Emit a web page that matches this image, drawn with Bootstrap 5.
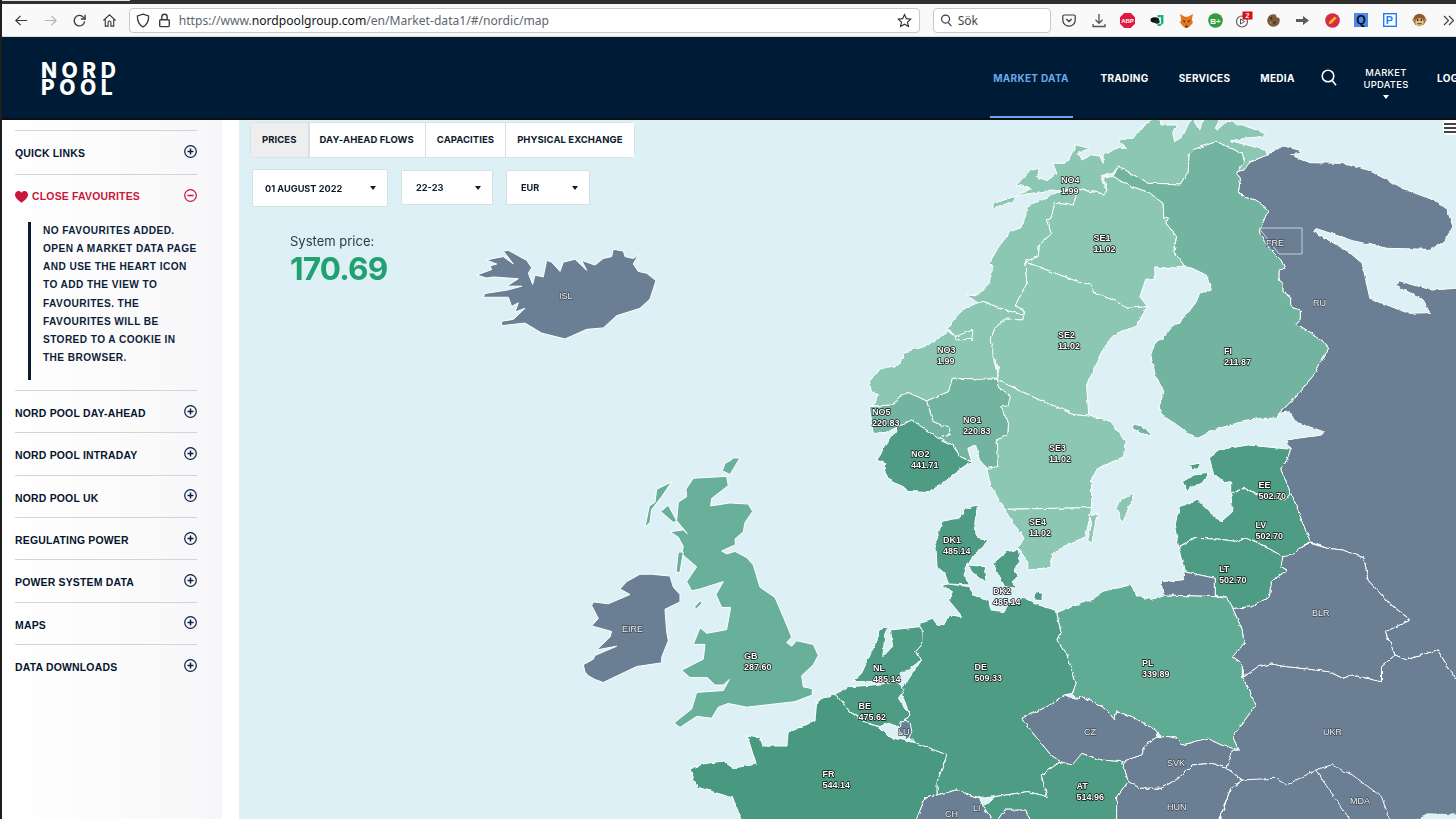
<!DOCTYPE html>
<html lang="en">
<head>
<meta charset="utf-8">
<title>Nord Pool</title>
<link href="https://cdn.jsdelivr.net/npm/bootstrap@5.3.0/dist/css/bootstrap.min.css" rel="stylesheet">
<style>
html,body{height:100%;margin:0;overflow:hidden;background:#fff;font-family:"Liberation Sans",sans-serif}
.win{height:819px;width:1456px;border-left:2px solid #1e1e1e;overflow:hidden}
.strip{height:4px;background:#2f2f2f;flex:none;position:relative}
.strip i{display:block;height:1px;width:128px;background:#e8e8e8}
.toolbar{height:33px;flex:none;background:#f9f9fa;border-bottom:1px solid #dcdcdc;padding-left:5px}
.tb-btn{width:29.2px;display:flex;justify-content:center;align-items:center;flex:none}
.urlbar{width:791px;height:25px;margin-left:5px;background:#fff;border:1px solid #c9c9c9;border-radius:4px;padding:0 7px 0 6px;flex:none}
.urltext{font:12.12px "Noto Sans",sans-serif;color:#5d6670;margin-left:8px;white-space:nowrap}
.urltext b{font-weight:400;color:#15151a}
.searchbar{width:118px;height:25px;margin:0 4px 0 13px;background:#fff;border:1px solid #c9c9c9;border-radius:4px;padding-left:6px;font:12px "Noto Sans",sans-serif;color:#444;flex:none;gap:5px}
.ext{width:29.2px;display:flex;justify-content:center;align-items:center;flex:none}
.hdr{height:81px;flex:none;background:#001b36;border-bottom:2px solid #0b0f14;padding:0 0 0 39px;box-sizing:content-box;flex-wrap:nowrap}
.logo{font:800 21px/17px Inter,sans-serif;letter-spacing:4.5px;color:#fff;margin:2px 0 0;padding:0;white-space:nowrap}
.mainnav{height:81px;width:485px;align-items:stretch;flex-wrap:nowrap;margin-right:-22px}
.mainnav .nav-link{font:700 10px/12px Inter,sans-serif;letter-spacing:.3px;color:#fff;padding:0;display:flex;align-items:center;justify-content:center;position:relative;white-space:nowrap;flex:none}
.mainnav .nav-link.active{color:#6ba7ea}
.mainnav .nav-link.active::after{content:"";position:absolute;left:-3px;right:-4px;bottom:0;height:2px;background:#6ba7ea}
.n-md{width:76px;margin-right:32px}
.n-tr{width:47px;margin-right:31px}
.n-se{width:51px;margin-right:31px}
.n-me{width:33px;margin-right:27px}
.n-sr{width:16px}
.mainnav .mu{flex-direction:column;font-weight:500;font-size:9.4px;text-align:center;width:44px;margin:0 29px 0 27px;padding-top:11px}
.mu i{display:block;width:0;height:0;border:3.5px solid transparent;border-top:4px solid #fff;border-bottom:0;margin:4px auto 0}
.side{width:220px;flex:none;background:linear-gradient(90deg,#fff 0,#f7f7f9 100%);padding:9.5px 25px 0 13px}
.side .list-group-item{background:transparent;border:0;border-radius:0;border-bottom:1px solid #cfd5de;padding:0;height:42.35px;color:#06142e;font-weight:700;font-size:10.45px;letter-spacing:.2px}
.side .list-group-item:first-child{border-top:1px solid #cfd5de;height:45.3px}
.rowh{height:100%;padding-top:4px}
.side .rowh svg{margin-top:-5px}
.favrow.list-group-item{height:216.3px}
.favhead{height:43px;color:#c8173c;gap:5px;padding-top:2px}
.favhead .ttl{display:flex;align-items:center;gap:4px}
.favnote{margin:4px 0 0 13px;border-left:3px solid #0b1a30;padding:0 0 0 12px;font-weight:700;font-size:10.15px;line-height:18.2px;height:158px;letter-spacing:.42px;color:#0e1e3a;white-space:nowrap}
.gap-w{width:17px;flex:none;background:#fff}
.mapwrap{position:relative;flex:1 1 auto;background:#dcf0f6;overflow:hidden;padding:2px 0 0 11px}
.mapsvg{position:absolute;left:0;top:0}
.mapsvg polygon,.mapsvg polyline{stroke:#fff;stroke-width:1;vector-effect:non-scaling-stroke;stroke-linejoin:round}
.mapsvg polyline{fill:none}
.c-se{fill:#8bc7b2}.c-fi{fill:#72b4a0}.c-gb{fill:#69b09a}.c-pl{fill:#61ab94}.c-de{fill:#4f9c84}.c-fr{fill:#4a9980}.c-g{fill:#6a7f93}
.mapsvg text{font:700 9px "Liberation Sans",sans-serif;fill:#fff;stroke:#0b0b0b;stroke-width:1.4px;paint-order:stroke;stroke-linejoin:round}
.mapsvg text.gl{stroke:#3e4a57;stroke-width:1.3px;fill:#f2f2f2;font-weight:400}
.tabs{position:relative;background:#fff;border:1px solid #d6e1e6;display:inline-flex}
.tabs .btn{border:0;border-radius:0;border-right:2px solid #d6e1e6;background:#fff;color:#0d1b2e;font:700 9.5px/34px Inter,sans-serif;padding:0 11px;height:34px;letter-spacing:.07px}
.tabs .btn:last-child{border-right:0}
.tabs .btn.active{background:#eeeeee;color:#0d1b2e}
.pickers{position:relative;margin:11px 0 0 2px;gap:13px;align-items:flex-start}
.pick{background:#fff;border:1px solid #d6e1e6;color:#0d1b2e;font:700 9.2px Inter,sans-serif;height:35px;border-radius:0;padding:0 11px 0 14px;margin-top:1px}
.pick.big{height:38px;margin-top:0;padding-left:12px}
.pick::after{content:"";width:0;height:0;border:3.5px solid transparent;border-top:4px solid #0d1b2e;border-bottom:0}
.sysp{position:relative;margin:26px 0 0 40px;color:#2b3848;font:400 13px/16px Inter,sans-serif}
.sysp strong{display:block;color:#22a06f;font:700 31.5px/36px Inter,sans-serif;letter-spacing:-.8px;margin-top:2px}
.burger{position:absolute;right:0;top:0;width:13px;height:15px;background:#fff;border-radius:0 0 0 2px;padding:3px 0 0 1px}
.burger i{display:block;height:2px;background:#444;margin-bottom:2px}
</style>
</head>
<body>
<div class="win d-flex flex-column">
  <div class="strip"><i></i></div>
  <div class="toolbar d-flex align-items-center">
    <span class="tb-btn"><svg width="15" height="15" viewBox="0 0 16 16" fill="none" stroke="#3a3a3e" stroke-width="1.3"><path d="M14 8H2M7 3 2 8l5 5"/></svg></span>
    <span class="tb-btn"><svg width="15" height="15" viewBox="0 0 16 16" fill="none" stroke="#b4b4b8" stroke-width="1.3"><path d="M2 8h12M9 3l5 5-5 5"/></svg></span>
    <span class="tb-btn"><svg width="15" height="15" viewBox="0 0 16 16" fill="none" stroke="#3a3a3e" stroke-width="1.4"><path d="M13.5 9a5.6 5.6 0 1 1-1.4-4.6L14 6.2"/><path d="M14 1.8v4.6H9.5"/></svg></span>
    <span class="tb-btn"><svg width="15" height="15" viewBox="0 0 16 16" fill="none" stroke="#3a3a3e" stroke-width="1.2"><path d="M1.5 8 8 2l6.5 6M3.5 7v7h3v-4a1.5 1.5 0 0 1 3 0v4h3V7"/></svg></span>
    <div class="urlbar d-flex align-items-center">
      <svg width="14" height="15" viewBox="0 0 14 15" fill="none" stroke="#3a3a3e" stroke-width="1.3"><path d="M7 1.2 12.6 3c.2 5-1.4 8.700-5.600 10.800C2.800 11.700 1.200 8 1.400 3z"/></svg>
      <svg class="ms-2" width="13" height="15" viewBox="0 0 13 15" fill="none" stroke="#3a3a3e" stroke-width="1.4"><rect x="1.700" y="6.800" width="9.600" height="6.800" rx="1"/><path d="M3.800 6.800V4a2.700 2.700 0 0 1 5.400 0v2.800"/></svg>
      <span class="urltext">https://www.<b>nordpoolgroup.com</b>/en/Market-data1/#/nordic/map</span>
      <svg class="ms-auto" width="15" height="15" viewBox="0 0 16 16" fill="none" stroke="#2e2e32" stroke-width="1.2"><path d="m8 1.600 2 4.400 4.700.500-3.500 3.200 1 4.700L8 12l-4.200 2.400 1-4.700L1.300 6.500 6 6z"/></svg>
    </div>
    <div class="searchbar d-flex align-items-center">
      <svg width="13" height="13" viewBox="0 0 14 14" fill="none" stroke="#3a3a3e" stroke-width="1.300"><circle cx="6" cy="5.500" r="4.300"/><path d="m9 9.200 3.300 3.800"/></svg>Sök
    </div>
    <span class="ext"><svg width="14" height="13" viewBox="0 0 14 13" fill="none" stroke="#3a3a3e" stroke-width="1.200"><path d="M2 1h10a1.200 1.200 0 0 1 1.200 1.200V6A6.200 6.200 0 0 1 .8 6V2.200A1.200 1.200 0 0 1 2 1z"/><path d="m4.300 5 2.700 2.600L9.700 5" stroke-width="1.400"/></svg></span>
    <span class="ext"><svg width="14" height="15" viewBox="0 0 14 15" fill="none" stroke="#55555a" stroke-width="1.300"><path d="M7 1v9M3.500 6.800 7 10.300l3.500-3.500M1 11v2.500h12V11"/></svg></span>
    <span class="ext"><svg width="15" height="15" viewBox="0 0 14 14"><polygon points="4,0 10,0 14,4 14,10 10,14 4,14 0,10 0,4" fill="#e3173f"/><text x="7" y="9.300" text-anchor="middle" font-size="5.600" font-weight="700" fill="#fff" font-family="Liberation Sans">ABP</text></svg></span>
    <span class="ext"><svg width="14" height="13" viewBox="0 0 13 12"><path d="M7 1h5.500v7.500L9.500 11H7V9h3.200V3H7z" fill="#12b57e"/><ellipse cx="4.500" cy="5.500" rx="4" ry="2.500" fill="#111"/><ellipse cx="6.500" cy="7" rx="2.500" ry="2" fill="#222"/></svg></span>
    <span class="ext"><svg width="15" height="15" viewBox="0 0 14 14"><path d="M1 1l4.500 2.500h3L13 1l-1 5 1 3-3 3.500-1.500 1h-3L4 12.500 1 9l1-3z" fill="#e4761b"/><path d="M5.500 13.500 7 11l1.500 2.500z" fill="#243447"/><path d="M3.500 6.500 6 7.500 5 9zM10.500 6.500 8 7.500 9 9z" fill="#5b2a0c"/></svg></span>
    <span class="ext"><svg width="15" height="15" viewBox="0 0 14 14"><circle cx="7" cy="7" r="6.800" fill="#2e9c3f"/><text x="7" y="9.800" text-anchor="middle" font-size="7.500" font-weight="700" fill="#fff" font-family="Liberation Sans">B+</text></svg></span>
    <span class="ext"><svg width="18" height="18" viewBox="0 0 18 17"><circle cx="7" cy="10" r="5.500" fill="none" stroke="#55555a" stroke-width="1.100"/><path d="m5.500 7.500 4 2.500-4 2.500z" fill="none" stroke="#55555a" stroke-width="1"/><rect x="7.500" y="0" width="10" height="8" fill="#d70f14"/><text x="12.500" y="6.800" text-anchor="middle" font-size="7" fill="#fff" font-weight="700" font-family="Liberation Sans">2</text></svg></span>
    <span class="ext"><svg width="14" height="14" viewBox="0 0 13 13"><circle cx="6" cy="7" r="5.800" fill="#7c5a3e"/><circle cx="4" cy="5" r="1" fill="#3e2a1a"/><circle cx="7" cy="9" r="1" fill="#3e2a1a"/><circle cx="3.500" cy="9" r=".8" fill="#b39a80"/><circle cx="11" cy="2" r="2.500" fill="#f9f9fa"/></svg></span>
    <span class="ext"><svg width="13" height="9" viewBox="0 0 13 9"><path d="M0 3h7V0l6 4.500L7 9V6H0z" fill="#5c5c60"/></svg></span>
    <span class="ext"><svg width="15" height="15" viewBox="0 0 14 14"><circle cx="7" cy="7" r="6.800" fill="#d92a48"/><path d="m3.500 10.500.6-2.500L9 3.200 10.900 5 6 9.900z" fill="#f8b62b"/></svg></span>
    <span class="ext"><svg width="14" height="14" viewBox="0 0 13 13"><rect width="13" height="13" fill="#4d8ae8"/><text x="6.500" y="10.500" text-anchor="middle" font-size="11.500" font-weight="700" fill="#08101e" font-family="Liberation Sans">Q</text></svg></span>
    <span class="ext"><svg width="14" height="14" viewBox="0 0 13 13"><rect width="13" height="13" fill="#1e7ff0"/><rect x="1.300" y="1.300" width="10.400" height="10.400" fill="#fff"/><text x="5.800" y="10" text-anchor="middle" font-size="10" font-weight="700" fill="#1e7ff0" font-family="Liberation Sans">P</text></svg></span>
    <span class="ext"><svg width="15" height="15" viewBox="0 0 14 14"><circle cx="7" cy="6.500" r="5.800" fill="#8e5d25"/><circle cx="1.600" cy="6.500" r="1.300" fill="#b88a4a"/><circle cx="12.400" cy="6.500" r="1.300" fill="#b88a4a"/><ellipse cx="7" cy="8.500" rx="4" ry="3.600" fill="#e4c388"/><rect x="4.600" y="5.800" width="1.400" height="1.600" fill="#18110a"/><rect x="8" y="5.800" width="1.400" height="1.600" fill="#18110a"/><path d="M5 10h4" stroke="#5d3c18"/></svg></span>
    <span class="ext"><svg width="12" height="11" viewBox="0 0 12 11" fill="none" stroke="#3a3a3e" stroke-width="1.100"><path d="m1 1 4.500 4.500L1 10M6 1l4.500 4.500L6 10"/></svg></span>
  </div>

  <nav class="navbar hdr d-flex align-items-center justify-content-between">
    <a class="navbar-brand logo" href="#">NORD<br>POOL</a>
    <div class="nav mainnav">
      <a class="nav-link active n-md" href="#">MARKET DATA</a>
      <a class="nav-link n-tr" href="#">TRADING</a>
      <a class="nav-link n-se" href="#">SERVICES</a>
      <a class="nav-link n-me" href="#">MEDIA</a>
      <a class="nav-link n-sr" href="#" aria-label="Search"><svg width="16" height="17" viewBox="0 0 16 17" fill="none" stroke="#fff" stroke-width="1.600"><circle cx="7" cy="7" r="5.800"/><path d="m11 11.200 4 5"/></svg></a>
      <a class="nav-link mu" href="#"><span>MARKET<br>UPDATES</span><i></i></a>
      <a class="nav-link" href="#">LOGIN</a>
    </div>
  </nav>

  <div class="d-flex flex-grow-1 overflow-hidden">
    <aside class="side">
      <ul class="list-group list-group-flush">
        <li class="list-group-item"><div class="rowh d-flex justify-content-between align-items-center"><span>QUICK LINKS</span><svg width="13" height="13" viewBox="0 0 13 13" fill="none" stroke="#0b1f45" stroke-width="1.200"><circle cx="6.500" cy="6.500" r="5.800"/><path d="M6.500 3.500v6M3.500 6.500h6" stroke-width="1.500"/></svg></div></li>
        <li class="list-group-item favrow">
          <div class="favhead d-flex justify-content-between align-items-center">
            <span class="ttl"><svg width="13" height="12" viewBox="0 0 13 12"><path d="M6.500 11.800C2 8.300 0 6.300 0 3.700 0 1.600 1.600 0 3.500 0c1.200 0 2.300.6 3 1.700C7.200.6 8.300 0 9.500 0 11.400 0 13 1.600 13 3.700c0 2.600-2 4.600-6.500 8.100z" fill="#c8173c"/></svg>CLOSE FAVOURITES</span>
            <svg style="margin-top:-3px" width="13" height="13" viewBox="0 0 13 13" fill="none" stroke="#c8173c" stroke-width="1.200"><circle cx="6.500" cy="6.500" r="5.800"/><path d="M3.500 6.500h6" stroke-width="1.500"/></svg>
          </div>
          <div class="favnote">NO FAVOURITES ADDED.<br>OPEN A MARKET DATA PAGE<br>AND USE THE HEART ICON<br>TO ADD THE VIEW TO<br>FAVOURITES. THE<br>FAVOURITES WILL BE<br>STORED TO A COOKIE IN<br>THE BROWSER.</div>
        </li>
        <li class="list-group-item"><div class="rowh d-flex justify-content-between align-items-center"><span>NORD POOL DAY-AHEAD</span><svg width="13" height="13" viewBox="0 0 13 13" fill="none" stroke="#0b1f45" stroke-width="1.200"><circle cx="6.500" cy="6.500" r="5.800"/><path d="M6.500 3.500v6M3.500 6.500h6" stroke-width="1.500"/></svg></div></li>
        <li class="list-group-item"><div class="rowh d-flex justify-content-between align-items-center"><span>NORD POOL INTRADAY</span><svg width="13" height="13" viewBox="0 0 13 13" fill="none" stroke="#0b1f45" stroke-width="1.200"><circle cx="6.500" cy="6.500" r="5.800"/><path d="M6.500 3.500v6M3.500 6.500h6" stroke-width="1.500"/></svg></div></li>
        <li class="list-group-item"><div class="rowh d-flex justify-content-between align-items-center"><span>NORD POOL UK</span><svg width="13" height="13" viewBox="0 0 13 13" fill="none" stroke="#0b1f45" stroke-width="1.200"><circle cx="6.500" cy="6.500" r="5.800"/><path d="M6.500 3.500v6M3.500 6.500h6" stroke-width="1.500"/></svg></div></li>
        <li class="list-group-item"><div class="rowh d-flex justify-content-between align-items-center"><span>REGULATING POWER</span><svg width="13" height="13" viewBox="0 0 13 13" fill="none" stroke="#0b1f45" stroke-width="1.200"><circle cx="6.500" cy="6.500" r="5.800"/><path d="M6.500 3.500v6M3.500 6.500h6" stroke-width="1.500"/></svg></div></li>
        <li class="list-group-item"><div class="rowh d-flex justify-content-between align-items-center"><span>POWER SYSTEM DATA</span><svg width="13" height="13" viewBox="0 0 13 13" fill="none" stroke="#0b1f45" stroke-width="1.200"><circle cx="6.500" cy="6.500" r="5.800"/><path d="M6.500 3.500v6M3.500 6.500h6" stroke-width="1.500"/></svg></div></li>
        <li class="list-group-item"><div class="rowh d-flex justify-content-between align-items-center"><span>MAPS</span><svg width="13" height="13" viewBox="0 0 13 13" fill="none" stroke="#0b1f45" stroke-width="1.200"><circle cx="6.500" cy="6.500" r="5.800"/><path d="M6.500 3.500v6M3.500 6.500h6" stroke-width="1.500"/></svg></div></li>
        <li class="list-group-item"><div class="rowh d-flex justify-content-between align-items-center"><span>DATA DOWNLOADS</span><svg width="13" height="13" viewBox="0 0 13 13" fill="none" stroke="#0b1f45" stroke-width="1.200"><circle cx="6.500" cy="6.500" r="5.800"/><path d="M6.500 3.500v6M3.500 6.500h6" stroke-width="1.500"/></svg></div></li>
      </ul>
    </aside>
    <div class="gap-w"></div>
    <main class="mapwrap">
      <svg class="mapsvg" width="1217" height="699" viewBox="239 120 1217 699">
        <defs><filter id="rough" filterUnits="userSpaceOnUse" x="239" y="120" width="1217" height="699"><feTurbulence type="fractalNoise" baseFrequency=".17" numOctaves="2" seed="4" result="n"/><feDisplacementMap in="SourceGraphic" in2="n" scale="3.500" xChannelSelector="R" yChannelSelector="G"/></filter></defs>
        <g filter="url(#rough)">
        <g transform="translate(850 120) scale(.3865 .3333)">
          <polygon class="c-g" points="1000,160 1020,130 1040,125 1085,100 1120,78 1165,90 1165,100 1140,105 1190,128 1270,130 1340,150 1440,210 1510,240 1545,270 1560,320 1535,370 1500,388 1390,385 1300,362 1205,325 1200,335 1290,395 1325,430 1345,535 1445,580 1500,578 1480,535 1415,500 1420,482 1505,510 1568,505 1600,505 1600,1680 1568,1680 1520,1590 1440,1620 1410,1605 1385,1535 1450,1500 1395,1450 1340,1380 1330,1315 1275,1290 1235,1285 1190,1265 1160,1175 1140,1120 1115,1050 1130,1020 1140,988 1130,960 1220,945 1225,935 1150,905 1140,875 1110,880 1145,840 1200,765 1238,685 1220,660 1195,640 1155,612 1165,600 1165,570 1140,560 1140,530 1120,515 1120,490 1110,480 1110,450 1125,445 1115,420 1085,385 1060,345 1060,330 1082,270 1050,240 1020,232 1005,215 1010,175"/>
          <polygon points="1575,432 1553,445 1575,475" fill="#dcf0f6" style="stroke:none"/>
          <polygon class="c-se" points="368,265 372,250 430,228 510,212 545,208 590,208 640,218 658,222 665,210 655,195 650,170 680,160 695,138 770,190 855,192 875,155 878,100 890,88 948,65 1015,100 1020,125 1000,155 1020,150 1035,125 1080,105 1075,90 1060,85 985,62 1070,48 1075,42 1040,25 1000,10 975,3 950,30 945,25 960,-10 915,-10 905,30 892,8 885,-10 860,50 840,65 835,40 845,15 805,15 800,-10 760,15 735,55 705,55 695,65 715,85 690,85 655,105 655,130 645,105 625,105 600,120 590,100 620,85 585,75 565,120 555,130 525,130 535,160 510,182 483,170 490,145 470,150 430,195 470,205 430,228 420,245"/>
          <polygon class="c-se" points="590,208 578,255 530,250 520,295 508,300 522,340 490,375 487,410 452,425 458,490 428,555 450,575 450,587 390,565 345,545 330,548 300,522 330,525 360,490 370,440 360,430 385,380 415,335 445,322 460,265 470,250 510,235 535,215"/>
          <polygon class="c-se" points="330,548 345,545 390,565 450,587 447,600 400,597 375,625 363,660 375,700 372,720 385,778 265,775 255,815 198,843 160,822 135,822 110,855 60,858 75,825 55,815 50,785 75,748 125,735 145,695 205,675 255,635 272,650 318,630 315,658 275,660 260,632 250,625 290,570"/>
          <polygon class="c-se" points="590,208 640,218 658,222 665,210 655,170 680,170 720,195 775,218 810,250 812,295 825,295 818,310 845,350 838,395 865,437 825,445 788,440 790,475 765,478 750,530 770,560 715,565 690,545 630,518 622,495 600,490 452,425 487,410 490,375 522,340 508,300 520,295 530,250 578,255"/>
          <polygon class="c-se" points="452,425 600,490 622,495 630,518 690,545 715,565 770,560 740,618 690,640 665,668 612,795 618,888 585,885 490,840 382,780 385,745 372,715 363,660 375,625 400,597 447,600 452,575 428,555 458,490"/>
          <polygon class="c-se" points="382,780 490,840 585,885 618,888 650,895 675,905 712,965 708,1010 690,1020 640,1045 625,1080 625,1163 400,1168 365,1100 355,1050 380,1020 378,960 408,945 410,910 390,860 415,830 382,800"/>
          <polygon class="c-fi" points="695,138 770,190 855,192 875,155 878,100 890,88 948,65 1015,100 1020,125 1000,160 1010,175 1005,215 1020,232 1050,240 1082,270 1060,330 1060,345 1085,385 1115,420 1125,445 1110,450 1110,480 1120,490 1120,515 1140,530 1140,560 1165,570 1165,600 1155,612 1195,640 1220,660 1238,685 1200,765 1145,840 1110,880 1105,895 1060,895 1000,910 940,930 900,955 870,935 840,910 805,885 800,860 812,815 790,765 778,705 790,665 810,655 830,625 860,600 890,555 905,520 935,510 922,465 885,445 865,437 838,395 845,350 818,310 825,295 812,295 810,250 775,218 720,195 680,170"/>
          <polygon class="c-fi" points="735,912 760,920 780,945 755,942 730,925"/>
          <polygon class="c-fi" points="265,775 382,778 382,800 415,830 408,858 390,860 410,910 408,945 378,960 382,1040 355,1045 335,1020 325,975 305,985 315,1025 285,1010 265,975 228,955 260,945 255,925 215,905 198,843 255,815"/>
          <polygon class="c-fi" points="135,822 160,822 198,843 215,905 258,925 258,945 228,955 160,900 125,920 90,940 60,940 55,900 50,860 110,855"/>
          <polygon class="c-de" points="160,900 228,955 265,975 285,1010 318,1028 300,1035 205,1118 160,1115 100,1080 88,1045 90,1030 68,1020 85,990 125,920"/>
          <polygon class="c-de" points="930,1015 950,990 1030,975 1140,988 1130,1020 1115,1050 1130,1090 1140,1120 1125,1140 1060,1125 1020,1105 985,1120 985,1085 970,1088 940,1060"/>
          <polygon class="c-de" points="880,1035 905,1030 905,1045 885,1050"/>
          <polygon class="c-de" points="860,1085 890,1065 930,1060 910,1090 880,1100 875,1120"/>
        </g>
        <g transform="translate(850 460) scale(.3865 .3333)">
          <polygon class="c-g" points="1020,650 1055,620 1090,612 1130,620 1240,635 1275,655 1300,645 1375,665 1375,620 1410,585 1440,600 1520,570 1568,660 1600,660 1600,1100 950,1100 985,985 1015,960 975,925 990,870 1005,870 990,830 1050,735 1015,650"/>
          <polygon class="c-g" points="1120,290 1190,250 1235,265 1275,270 1330,295 1340,360 1395,430 1450,480 1385,515 1410,585 1375,620 1375,665 1300,645 1275,655 1240,635 1130,620 1090,612 1055,620 1020,650 1015,610 990,590 1020,550 1015,510 990,445 1040,440 1085,410 1090,365 1130,330 1115,320"/>
          <polyline points="1205,930 1245,915 1300,945 1375,1010 1400,1090"/>
          <polyline points="1205,930 1240,990 1300,1090"/>
          <polyline points="1015,960 1100,955 1130,975 1205,930"/>
          <polygon points="1445,1090 1500,1060 1600,1065 1600,1090" fill="#dcf0f6" style="stroke:none"/>
          <polygon class="c-se" points="400,148 625,143 610,230 545,263 525,280 520,322 460,330 460,305 435,265 450,235 440,215 425,195"/>
          <polygon class="c-se" points="735,103 705,190 690,140 700,118"/>
          <polygon class="c-se" points="640,160 625,250 615,240 625,190 620,165"/>
          <polygon class="c-de" points="850,260 840,200 852,140 900,118 945,170 960,185 990,155 985,100 1020,85 1060,105 1125,120 1140,100 1160,155 1190,245 1165,265 1145,285 1120,290 1060,250 1025,232 1005,245 950,237 890,235"/>
          <polygon class="c-de" points="850,262 890,235 950,237 1005,245 1025,232 1060,250 1120,290 1115,320 1130,330 1090,365 1085,410 1040,440 990,445 975,415 945,405 945,355 865,335"/>
          <polygon class="c-g" points="865,335 945,355 945,410 810,405 805,365 860,360"/>
          <polygon class="c-pl" points="540,455 635,415 650,395 725,375 745,410 780,418 810,405 945,410 975,415 990,445 1015,510 1020,550 990,590 1015,610 1015,650 1050,735 990,830 1005,870 960,855 925,835 860,855 845,835 825,830 810,835 790,810 730,770 690,755 685,780 660,745 600,710 585,718 575,700 585,670 560,580 535,540 545,515 535,460"/>
          <polygon class="c-de" points="180,490 215,478 230,500 245,490 255,465 290,470 255,420 265,395 235,375 255,372 310,380 320,405 360,425 365,450 400,455 405,440 450,412 475,430 530,450 535,460 545,515 535,540 560,580 585,670 575,700 555,705 510,740 445,775 470,815 520,885 545,905 495,945 510,1010 460,995 375,1010 340,1015 300,1000 275,990 225,1005 225,965 250,885 170,850 125,810 155,765 130,690 150,660 185,600 170,575 185,555 185,505"/>
          <polygon class="c-de" points="225,320 222,250 238,183 280,175 300,145 330,135 322,200 330,235 355,240 345,260 320,285 300,325 295,345 310,375 255,372 245,340"/>
          <polygon class="c-de" points="305,315 350,320 355,365 335,355 315,335"/>
          <polygon class="c-de" points="370,310 405,275 435,268 440,300 425,330 435,350 420,365 430,385 400,380 385,345"/>
          <polygon class="c-de" points="480,395 497,400 497,422 478,420"/>
          <polygon class="c-de" points="5,665 30,640 70,540 75,510 100,500 90,525 85,590 110,560 105,510 180,500 187,510 185,555 170,575 185,600 150,630 130,640 125,660 60,665"/>
          <polygon class="c-de" points="-39,702 0,680 60,675 125,665 140,690 125,715 155,765 125,800 100,790 75,800 40,785 0,755"/>
          <polygon class="c-g" points="130,785 155,785 160,815 150,840 125,815"/>
          <polygon class="c-g" points="165,1090 195,1015 225,1005 275,990 335,1015 345,1040 375,1090"/>
          <polygon class="c-g" points="375,1090 400,1050 455,1050 470,1090"/>
          <polygon class="c-de" points="375,1010 460,995 510,1010 495,945 545,905 600,880 650,900 705,905 720,965 690,1010 690,1090 470,1090 455,1050 400,1050 375,1090 345,1040"/>
          <polygon class="c-g" points="445,775 510,740 555,705 585,718 600,710 660,745 685,780 690,755 730,770 790,810 795,830 765,855 755,885 705,905 650,900 600,880 575,915 545,905 520,885 470,815"/>
          <polygon class="c-g" points="705,905 755,885 765,855 795,830 825,830 845,835 860,855 925,835 960,855 1005,870 990,870 975,925 935,910 885,915 850,955 805,985 750,985 720,965"/>
          <polygon class="c-g" points="720,965 750,985 805,985 850,955 885,915 935,910 975,925 1015,960 985,985 950,1090 690,1090 690,1010"/>
        </g>
        <polygon class="c-fr" points="835,694 850,712 865,722 879,727 889,737 916,743 947,755 937,782 937,795 925,798 914,825 743,825 733,798 697,787 690,769 703,764 723,761 733,768 756,764 747,735 760,737 763,746 787,746 788,733 815,720 817,700"/>
        </g>
        <g transform="translate(470 240) scale(.3333 .3693)">
          <polygon class="c-g" points="20,95 65,80 60,70 80,65 50,55 70,50 100,45 130,65 100,30 115,28 170,55 185,75 175,90 188,120 195,95 220,100 230,55 245,60 270,85 280,60 315,52 350,82 335,55 375,68 400,50 425,45 430,25 460,30 465,45 490,50 505,40 490,65 505,85 530,90 558,110 540,160 510,185 440,205 400,238 350,242 285,268 215,252 165,225 95,232 95,220 130,215 165,185 135,195 145,170 125,180 115,155 40,155 45,145 115,135 155,125 110,125 145,105 70,100 50,103"/>
          <polygon class="c-g" points="340,1150 370,1135 375,1125 440,1100 380,1110 420,1075 425,1060 365,1045 385,1025 365,990 370,980 415,985 480,960 450,945 470,925 510,905 545,905 600,910 610,940 630,960 630,980 585,1000 590,1060 595,1085 575,1130 575,1145 500,1155 400,1198 375,1190 355,1180 345,1170"/>
          <polygon class="c-gb" points="670,645 770,640 775,665 725,700 722,720 780,712 835,715 848,735 825,765 820,790 795,810 797,825 755,842 770,850 795,843 830,860 850,880 870,940 915,968 940,1020 965,1075 950,1090 965,1100 980,1085 1030,1095 1045,1125 1030,1150 995,1180 1000,1210 1027,1215 1027,1232 975,1250 830,1265 775,1255 745,1265 725,1295 680,1290 630,1320 612,1308 665,1270 680,1225 760,1220 778,1190 760,1205 735,1205 712,1185 660,1185 635,1165 700,1135 705,1095 670,1095 690,1050 710,1065 770,1055 782,995 755,995 738,960 760,925 690,945 665,950 650,925 680,885 635,850 640,830 625,805 600,790 640,785 652,795 620,760 625,710 650,695 648,675"/>
          <polygon class="c-gb" points="757,625 765,605 785,595 790,590 810,590 780,635"/>
          <polygon class="c-gb" points="525,778 538,720 555,710 560,675 605,655 575,695 545,730 540,765"/>
          <polygon class="c-gb" points="572,735 595,718 620,760 610,765"/>
          <polygon class="c-gb" points="625,845 640,845 630,900 618,900"/>
          <polygon class="c-gb" points="672,995 692,975 695,985 680,998"/>
        </g>
        <polygon points="1259,228 1302,228 1302,254 1279,254" fill="none" style="stroke:#c8d2da"/>
        <g>
          <text x="1061" y="183">NO4</text><text x="1061" y="194">1.99</text>
          <text x="1093.500" y="241">SE1</text><text x="1093.500" y="252">11.02</text>
          <text x="1058" y="338">SE2</text><text x="1058" y="349">11.02</text>
          <text x="937" y="353">NO3</text><text x="937" y="364">1.99</text>
          <text x="1224" y="354">FI</text><text x="1224" y="365">211.87</text>
          <text x="872" y="415">NO5</text><text x="872" y="426">220.83</text>
          <text x="963" y="423">NO1</text><text x="963" y="434">220.83</text>
          <text x="911" y="457">NO2</text><text x="911" y="468">441.71</text>
          <text x="1049" y="451">SE3</text><text x="1049" y="462">11.02</text>
          <text x="1029" y="525">SE4</text><text x="1029" y="536">11.02</text>
          <text x="1258.500" y="488">EE</text><text x="1258.500" y="499">502.70</text>
          <text x="1255.500" y="528">LV</text><text x="1255.500" y="539">502.70</text>
          <text x="1219" y="572">LT</text><text x="1219" y="583">502.70</text>
          <text x="943" y="543">DK1</text><text x="943" y="554">485.14</text>
          <text x="993" y="594">DK2</text><text x="993" y="605">485.14</text>
          <text x="873" y="671">NL</text><text x="873" y="682">485.14</text>
          <text x="858.500" y="709">BE</text><text x="858.500" y="720">475.62</text>
          <text x="974.500" y="670">DE</text><text x="974.500" y="681">509.33</text>
          <text x="1142" y="666">PL</text><text x="1142" y="677">339.89</text>
          <text x="1076.500" y="789">AT</text><text x="1076.500" y="800">514.96</text>
          <text x="822.500" y="777">FR</text><text x="822.500" y="788">544.14</text>
          <text x="744" y="659">GB</text><text x="744" y="670">287.60</text>
          <text class="gl" x="559" y="299">ISL</text><text class="gl" x="622" y="632">EIRE</text>
          <text class="gl" x="1313" y="306">RU</text><text class="gl" x="1266" y="246">FRE</text>
          <text class="gl" x="1312" y="616">BLR</text><text class="gl" x="1323" y="735">UKR</text>
          <text class="gl" x="1084" y="735">CZ</text><text class="gl" x="1167" y="766">SVK</text>
          <text class="gl" x="1167" y="810">HUN</text><text class="gl" x="1350" y="804">MDA</text>
          <text class="gl" x="898" y="735">LU</text><text class="gl" x="945" y="817">CH</text>
          <text class="gl" x="973" y="811">LI</text>
        </g>
      </svg>
      <div class="tabs btn-group" role="group">
        <button class="btn active" type="button">PRICES</button>
        <button class="btn" type="button">DAY-AHEAD FLOWS</button>
        <button class="btn" type="button">CAPACITIES</button>
        <button class="btn" type="button">PHYSICAL EXCHANGE</button>
      </div>
      <div class="pickers d-flex">
        <div class="pick big d-flex align-items-center justify-content-between" style="width:136px">01 AUGUST 2022</div>
        <div class="pick d-flex align-items-center justify-content-between" style="width:92px">22-23</div>
        <div class="pick d-flex align-items-center justify-content-between" style="width:84px">EUR</div>
      </div>
      <div class="sysp">System price:<strong>170.69</strong></div>
      <div class="burger"><i></i><i></i><i></i></div>
    </main>
  </div>
</div>
<script src="https://cdn.jsdelivr.net/npm/bootstrap@5.3.0/dist/js/bootstrap.bundle.min.js"></script>
</body>
</html>
